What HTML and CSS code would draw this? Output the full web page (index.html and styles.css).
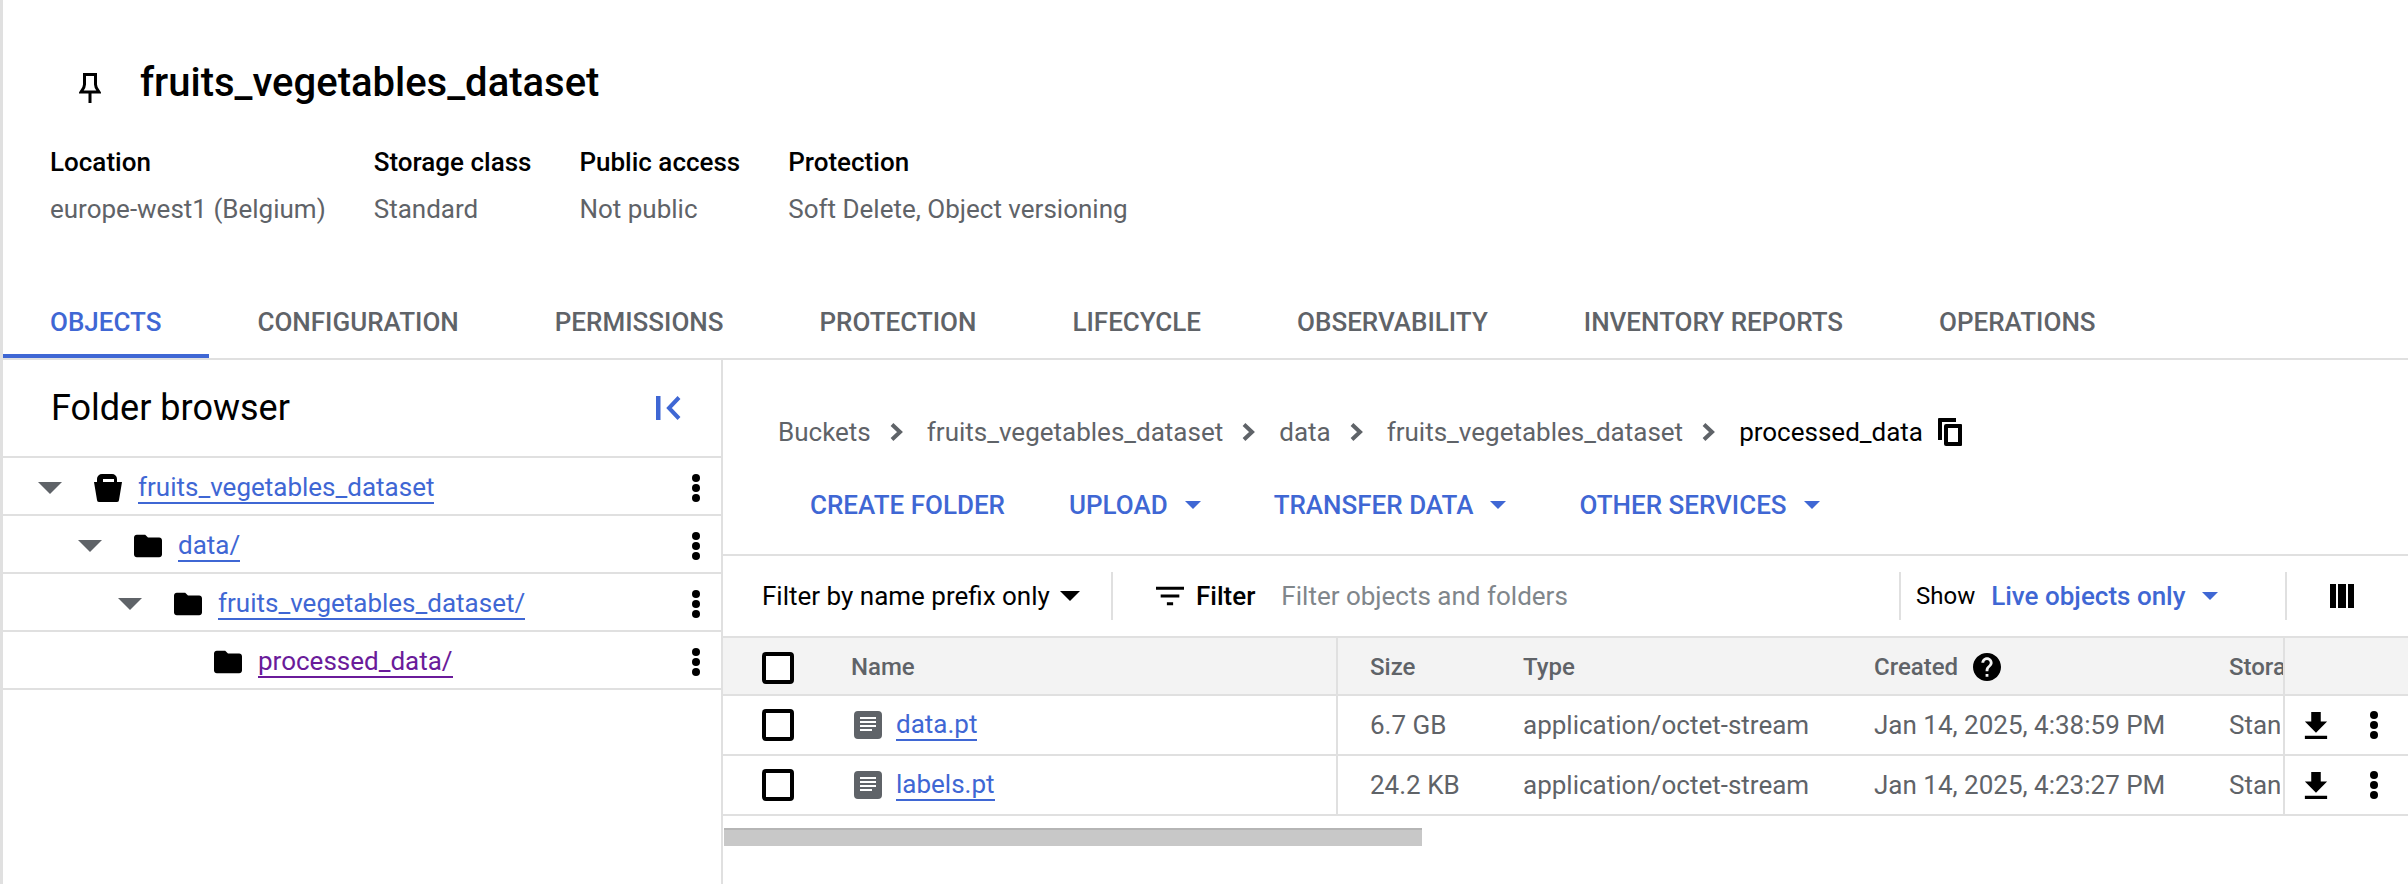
FILE: index.html
```html
<!DOCTYPE html>
<html lang="en">
<head>
  <meta charset="UTF-8">
  <title>fruits_vegetables_dataset</title>
  <link rel="stylesheet" href="styles.css">
</head>
<body>
  <svg class="defs">
    <symbol id="folder" viewBox="2 4 20 16"><path d="M10 4H4c-1.1 0-1.99.9-1.99 2L2 18c0 1.1.9 2 2 2h16c1.1 0 2-.9 2-2V8c0-1.1-.9-2-2-2h-8l-2-2z"/></symbol>
    <symbol id="kebab" viewBox="0 0 8 28"><circle cx="4" cy="4" r="4"/><circle cx="4" cy="14" r="4"/><circle cx="4" cy="24" r="4"/></symbol>
    <symbol id="caret" viewBox="0 0 24 12"><path d="M0 0h24L12 12z"/></symbol>
    <symbol id="chevron" viewBox="0 0 14 18"><path d="M2 1.500 10 9l-8 7.500" fill="none" stroke="currentColor" stroke-width="4"/></symbol>
    <symbol id="doc" viewBox="0 0 28 28"><path fill-rule="evenodd" d="M4 0h20a4 4 0 0 1 4 4v20a4 4 0 0 1-4 4H4a4 4 0 0 1-4-4V4a4 4 0 0 1 4-4zM6 6v2h16V6zm0 4v2h16v-2zm0 4v2h16v-2zm0 4v2h12v-2z"/></symbol>
    <symbol id="download" viewBox="5 3 14 17"><path d="M19 9h-4V3H9v6H5l7 7 7-7zM5 18v2h14v-2H5z"/></symbol>
  </svg>

  <header class="bucket-head">
    <div class="title-row">
      <svg class="pin" viewBox="0 0 22 30"><path d="M5.500 1.500h11v10c0 3 2 5 3.500 7.500H2c1.500-2.500 3.500-4.500 3.500-7.500zM11 19v11" fill="none" stroke="currentColor" stroke-width="3"/></svg>
      <h1>fruits_vegetables_dataset</h1>
    </div>
    <dl class="meta">
      <div><dt>Location</dt><dd>europe-west1 (Belgium)</dd></div>
      <div><dt>Storage class</dt><dd>Standard</dd></div>
      <div><dt>Public access</dt><dd>Not public</dd></div>
      <div><dt>Protection</dt><dd>Soft Delete, Object versioning</dd></div>
    </dl>
    <nav class="tabs">
      <a class="tab active">OBJECTS</a>
      <a class="tab">CONFIGURATION</a>
      <a class="tab">PERMISSIONS</a>
      <a class="tab">PROTECTION</a>
      <a class="tab">LIFECYCLE</a>
      <a class="tab">OBSERVABILITY</a>
      <a class="tab">INVENTORY REPORTS</a>
      <a class="tab">OPERATIONS</a>
    </nav>
  </header>

  <main class="content">
    <aside class="sidebar">
      <div class="side-head">
        <h2>Folder browser</h2>
        <svg class="collapse" viewBox="0 0 25 24"><rect x="0" y="0" width="4" height="24"/><path d="M23 1.500 13 12l10 10.500" fill="none" stroke-width="4"/></svg>
      </div>
      <div class="tree-row level0">
        <svg class="tree-caret"><use href="#caret"/></svg>
        <svg class="bucket" viewBox="0 0 28 28"><path fill-rule="evenodd" d="M8 0h10a5 5 0 0 1 5 5v3h5l-3 18a2 2 0 0 1-2 2H5a2 2 0 0 1-2-2L0 8h3V5a5 5 0 0 1 5-5zm1 5v3h11V5z"/></svg>
        <a class="link">fruits_vegetables_dataset</a>
        <svg class="kebab"><use href="#kebab"/></svg>
      </div>
      <div class="tree-row level1">
        <svg class="tree-caret"><use href="#caret"/></svg>
        <svg class="folder"><use href="#folder"/></svg>
        <a class="link">data/</a>
        <svg class="kebab"><use href="#kebab"/></svg>
      </div>
      <div class="tree-row level2">
        <svg class="tree-caret"><use href="#caret"/></svg>
        <svg class="folder"><use href="#folder"/></svg>
        <a class="link">fruits_vegetables_dataset/</a>
        <svg class="kebab"><use href="#kebab"/></svg>
      </div>
      <div class="tree-row level3">
        <span class="tree-caret"></span>
        <svg class="folder"><use href="#folder"/></svg>
        <a class="link visited">processed_data/</a>
        <svg class="kebab"><use href="#kebab"/></svg>
      </div>
    </aside>

    <section class="objects">
      <div class="crumbs">
        <span>Buckets</span><svg class="chev"><use href="#chevron"/></svg>
        <span>fruits_vegetables_dataset</span><svg class="chev"><use href="#chevron"/></svg>
        <span>data</span><svg class="chev"><use href="#chevron"/></svg>
        <span>fruits_vegetables_dataset</span><svg class="chev"><use href="#chevron"/></svg>
        <span class="current">processed_data</span>
        <svg class="copy" viewBox="0 0 24 28"><path fill-rule="evenodd" d="M1 0h17v4H4v18H0V1a1 1 0 0 1 1-1zM8 6h15a1 1 0 0 1 1 1v20a1 1 0 0 1-1 1H8a2 2 0 0 1-2-2V8a2 2 0 0 1 2-2zm2 4v14h10V10z"/></svg>
      </div>
      <div class="actions">
        <a class="action">CREATE FOLDER</a>
        <a class="action">UPLOAD<svg class="mini-caret"><use href="#caret"/></svg></a>
        <a class="action">TRANSFER DATA<svg class="mini-caret"><use href="#caret"/></svg></a>
        <a class="action">OTHER SERVICES<svg class="mini-caret"><use href="#caret"/></svg></a>
      </div>

      <div class="filter-bar">
        <div class="prefix">Filter by name prefix only<svg class="black-caret"><use href="#caret"/></svg></div>
        <div class="filter-box">
          <svg class="filter-icon" viewBox="3 6 18 12"><path d="M10 18h4v-2h-4v2zM3 6v2h18V6H3zm3 7h12v-2H6v2z"/></svg>
          <b>Filter</b>
          <span class="placeholder">Filter objects and folders</span>
        </div>
        <div class="show"><span class="show-label">Show</span><span class="live">Live objects only</span><svg class="mini-caret"><use href="#caret"/></svg></div>
        <div class="columns">
          <svg viewBox="0 0 24 24"><rect width="6" height="24"/><rect x="8" width="8" height="24"/><rect x="18" width="6" height="24"/></svg>
        </div>
      </div>

      <div class="table">
        <div class="t-row t-head">
          <div class="cell"><span class="check"></span></div>
          <div class="cell">Name</div>
          <div class="cell">Size</div>
          <div class="cell">Type</div>
          <div class="cell">Created<svg class="help" viewBox="2 2 20 20"><path d="M12 2C6.480 2 2 6.480 2 12s4.480 10 10 10 10-4.480 10-10S17.520 2 12 2zm1 17h-2v-2h2v2zm2.070-7.750l-.9.920C13.450 12.900 13 13.500 13 15h-2v-.5c0-1.100.45-2.100 1.170-2.830l1.240-1.260c.37-.36.59-.86.59-1.410 0-1.100-.9-2-2-2s-2 .9-2 2H8c0-2.210 1.790-4 4-4s4 1.790 4 4c0 .88-.36 1.680-.93 2.250z"/></svg></div>
          <div class="cell">Storage class</div>
          <div class="cell sticky"></div>
        </div>
        <div class="t-row">
          <div class="cell"><span class="check"></span></div>
          <div class="cell"><svg class="doc"><use href="#doc"/></svg><a class="link">data.pt</a></div>
          <div class="cell">6.7 GB</div>
          <div class="cell">application/octet-stream</div>
          <div class="cell">Jan 14, 2025, 4:38:59 PM</div>
          <div class="cell">Standard</div>
          <div class="cell sticky"><svg class="download"><use href="#download"/></svg><svg class="kebab"><use href="#kebab"/></svg></div>
        </div>
        <div class="t-row">
          <div class="cell"><span class="check"></span></div>
          <div class="cell"><svg class="doc"><use href="#doc"/></svg><a class="link">labels.pt</a></div>
          <div class="cell">24.2 KB</div>
          <div class="cell">application/octet-stream</div>
          <div class="cell">Jan 14, 2025, 4:23:27 PM</div>
          <div class="cell">Standard</div>
          <div class="cell sticky"><svg class="download"><use href="#download"/></svg><svg class="kebab"><use href="#kebab"/></svg></div>
        </div>
      </div>
      <div class="scrollbar"></div>
    </section>
  </main>
</body>
</html>
```

FILE: styles.css
```css
* { box-sizing: border-box; }
html, body { height: 100%; }
body {
  margin: 0;
  font-family: Roboto, 'Noto Sans', sans-serif;
  font-size: 26px;
  color: #5f6368;
  background: #fff;
  border-left: 3px solid #e0e0e0;
  display: flex;
  flex-direction: column;
  overflow: hidden;
}
svg { display: block; flex: none; fill: currentColor; }
.defs { width: 0; height: 0; position: absolute; }

/* bucket header */
.bucket-head { border-bottom: 2px solid #e0e0e0; height: 360px; flex: none; }
.title-row { display: flex; align-items: center; height: 48px; margin-top: 58px; padding-left: 76px; }
.pin { width: 22px; height: 30px; color: #000; margin: 12px 39px 0 0; }
h1 { margin: 0; font-size: 40px; font-weight: 500; color: #000; }
.meta { display: flex; gap: 48px; margin: 41px 0 0; padding-left: 47px; }
dt { color: #000; font-weight: 500; line-height: 30px; }
dd { margin: 17px 0 0; line-height: 30px; }
.tabs { display: flex; margin: 59px 0 0 -1px; }
.tab { height: 75px; line-height: 78px; padding: 0 48px; font-weight: 500; border-bottom: 4px solid transparent; }
.tab.active { color: #3f67d4; border-bottom-color: #3f67d4; }

.content { display: flex; flex: 1; }

/* folder tree */
.sidebar { width: 720px; flex: none; border-right: 2px solid #e0e0e0; }
.side-head { height: 98px; border-bottom: 2px solid #e0e0e0; display: flex; align-items: center; justify-content: space-between; padding: 0 40px 0 48px; }
h2 { margin: 0; font-size: 36px; font-weight: 400; color: #000; }
.collapse { width: 25px; height: 24px; color: #3f67d4; fill: #3f67d4; stroke: #3f67d4; }
.tree-row { height: 58px; border-bottom: 2px solid #e0e0e0; display: flex; align-items: center; padding: 4px 21px 0 0; }
.level0 { padding-left: 35px; }
.level1 { padding-left: 75px; }
.level2 { padding-left: 115px; }
.level3 { padding-left: 155px; }
.tree-caret { width: 24px; height: 12px; color: #5f6368; margin-right: 32px; flex: none; }
.bucket { width: 28px; height: 28px; color: #000; margin-right: 16px; }
.folder { width: 28px; height: 24px; color: #000; margin-right: 16px; }
.tree-row .kebab { margin-left: auto; }
.kebab { width: 8px; height: 28px; color: #000; }
.link { color: #3f67d4; border-bottom: 2px solid #3f67d4; line-height: 30px; }
.link.visited { color: #6a1b9a; border-bottom-color: #6a1b9a; }

/* objects panel */
.objects { flex: 1; min-width: 0; }
.crumbs { display: flex; align-items: center; height: 40px; margin-top: 52px; padding-left: 55px; }
.chev { width: 14px; height: 18px; margin: 0 23px 0 19px; }
.current { color: #000; }
.copy { width: 24px; height: 28px; color: #000; margin-left: 15px; }
.actions { display: flex; height: 40px; margin-top: 33px; padding-left: 87px; gap: 64px; align-items: center; }
.action { color: #3f67d4; font-weight: 500; display: flex; align-items: center; }
.mini-caret { width: 16px; height: 8px; color: #3f67d4; margin-left: 17px; margin-right: 9px; }
.filter-bar { height: 84px; margin-top: 29px; border-top: 2px solid #e0e0e0; border-bottom: 2px solid #e0e0e0; display: flex; align-items: center; }
.prefix { display: flex; align-items: center; color: #000; width: 390px; height: 48px; padding-left: 39px; border-right: 2px solid #e0e0e0; }
.black-caret { width: 20px; height: 10px; color: #000; margin-left: 10px; }
.filter-box { display: flex; align-items: center; width: 788px; padding-left: 43px; height: 48px; border-right: 2px solid #e0e0e0; }
.filter-icon { width: 28px; height: 20px; color: #000; margin-right: 12px; }
.filter-box b { color: #000; font-weight: 500; }
.placeholder { margin-left: 26px; color: #80868b; }
.show { display: flex; align-items: center; color: #000; width: 386px; height: 48px; padding-left: 15px; border-right: 2px solid #e0e0e0; }
.show-label { font-size: 24px; }
.live { color: #3f67d4; font-weight: 500; margin-left: 16px; }
.columns { padding-left: 43px; }
.columns svg { width: 24px; height: 24px; color: #000; }

.table { overflow: hidden; }
.t-row {
  display: grid;
  grid-template-columns: 128px 487px 153px 351px 355px 86px 125px;
  height: 60px;
  border-bottom: 2px solid #e0e0e0;
}
.t-head { height: 58px; background: #f3f3f3; font-size: 24px; font-weight: 500; }
.t-head .cell { padding-top: 2px; }
.t-head .check { margin-top: 1px; }
.cell { display: flex; align-items: center; padding-left: 32px; white-space: nowrap; overflow: hidden; }
.cell:nth-child(1) { padding-left: 39px; }
.cell:nth-child(2) { padding-left: 0; border-right: 2px solid #e0e0e0; }
.t-row:not(.t-head) .cell:nth-child(6) { clip-path: inset(0 3px 0 0); }
.sticky { padding-left: 19px; border-left: 2px solid #e0e0e0; }
.check { width: 32px; height: 32px; border: 4px solid #000; border-radius: 4px; background: #fff; }
.help { width: 28px; height: 28px; color: #000; margin-left: 15px; }
.doc { width: 28px; height: 28px; margin: 0 14px 0 3px; }
.download { width: 24px; height: 27px; color: #000; margin-right: 42px; }
.scrollbar { width: 698px; height: 18px; margin: 12px 0 0 1px; background: #c8c8c8; border-top: 2px solid #b5b5b5; }
```
